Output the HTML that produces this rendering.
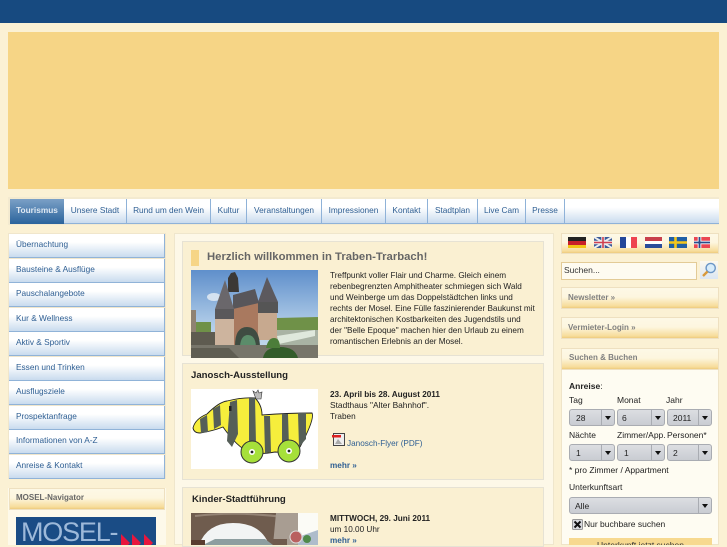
<!DOCTYPE html>
<html lang="de"><head><meta charset="utf-8"><title>Traben-Trarbach</title>
<style>
html,body{margin:0;padding:0}
body{width:727px;height:545px;overflow:hidden;position:relative;background:#fbf1d4;font-family:"Liberation Sans",sans-serif;font-size:8.5px;color:#222}
div,a,span.a{position:absolute;box-sizing:border-box;white-space:nowrap}
.nav{top:199px;height:25px;background:linear-gradient(#fff 0%,#fff 35%,#c9dbee 100%);border-right:1px solid #8fb2d8;border-bottom:1px solid #8fb2d8;color:#2f5f93;line-height:22px;text-align:center;font-size:8.3px}
.side{left:9px;width:156px;height:24px;background:linear-gradient(#fff 0%,#fff 35%,#c9dbee 100%);border-bottom:1px solid #90b3d8;border-right:1px solid #90b3d8;color:#2f5f93;line-height:21px;padding-left:7px;font-size:8.3px}
.gold{background:linear-gradient(#fdf8e6 0%,#fdf6df 45%,#f7dc9a 90%,#eecb7c 100%);border:1px solid #eee0c0;color:#808080;font-weight:bold;font-size:8px;padding-left:6px}
.box{left:182px;width:362px;background:#faf0d2;border:1px solid #e6e2d4}
.t{font-size:8.2px;line-height:11px;color:#222}
.sel{height:17px;background:linear-gradient(#dcdee2,#c9ccd2);border:1px solid #a9acb2;border-radius:3px;font-size:8.5px;line-height:16px;padding-left:5px;color:#222}
.sel:after{content:"";position:absolute;right:3px;top:6px;border-left:3.5px solid transparent;border-right:3.5px solid transparent;border-top:4px solid #111}
.sel:before{content:"";position:absolute;right:12px;top:0;bottom:0;width:1px;background:#a9acb2}
.l{font-size:8.5px;color:#222}
</style></head><body>
<div style="left:0;top:0;width:727px;height:23px;background:#174a80"></div>
<div style="left:8px;top:32px;width:711px;height:157px;background:#f6d586"></div>

<div style="left:8px;top:197px;width:711px;height:28px;background:#f3ead0"></div>
<div style="left:10px;top:199px;width:709px;height:25px;background:linear-gradient(#fff 0%,#fff 35%,#c9dbee 100%);border-bottom:1px solid #8fb2d8"></div>
<div class="nav" style="left:10px;width:54px;background:linear-gradient(#7ba0c6,#2a639c);color:#dfe9f3;font-weight:bold;border:0">Tourismus</div>
<div class="nav" style="left:64px;width:63px">Unsere Stadt</div>
<div class="nav" style="left:127px;width:84px">Rund um den Wein</div>
<div class="nav" style="left:211px;width:36px">Kultur</div>
<div class="nav" style="left:247px;width:75px">Veranstaltungen</div>
<div class="nav" style="left:322px;width:64px">Impressionen</div>
<div class="nav" style="left:386px;width:42px">Kontakt</div>
<div class="nav" style="left:428px;width:50px">Stadtplan</div>
<div class="nav" style="left:478px;width:48px">Live Cam</div>
<div class="nav" style="left:526px;width:39px">Presse</div>

<div style="left:8px;top:233px;width:158px;height:246px;background:#f0e6cc"></div>
<div class="side" style="top:234px">Übernachtung</div>
<div class="side" style="top:259px">Bausteine &amp; Ausflüge</div>
<div class="side" style="top:283px">Pauschalangebote</div>
<div class="side" style="top:308px">Kur &amp; Wellness</div>
<div class="side" style="top:332px">Aktiv &amp; Sportiv</div>
<div class="side" style="top:357px">Essen und Trinken</div>
<div class="side" style="top:381px">Ausflugsziele</div>
<div class="side" style="top:406px">Prospektanfrage</div>
<div class="side" style="top:430px">Informationen von A-Z</div>
<div class="side" style="top:455px">Anreise &amp; Kontakt</div>

<div style="left:8px;top:488px;width:158px;height:57px;background:#fdf9ea"></div>
<div class="gold" style="left:9px;top:488px;width:156px;height:22px;line-height:18px;color:#666">MOSEL-Navigator</div>
<div style="left:16px;top:517px;width:140px;height:28px;background:#1a4c85;overflow:hidden"><div style="left:5px;top:1px;color:#9db9d9;font-size:27px;line-height:28px;letter-spacing:-1.2px">MOSEL-</div>
<svg style="position:absolute;left:105px;top:17px" width="35" height="18"><path d="M0 0l9 9-9 9zM11 0l9 9-9 9zM23 0l9 9-9 9z" fill="#e8163c"/></svg></div>

<div style="left:174px;top:233px;width:380px;height:312px;background:#fdf8e8;border:1px solid #efe6cc"></div>

<div class="box" style="top:241px;height:115px"></div>
<div style="left:191px;top:250px;width:8px;height:16px;background:#f6d586"></div>
<div style="left:207px;top:250px;font-size:11.3px;line-height:14px;font-weight:bold;color:#666">Herzlich willkommen in Traben-Trarbach!</div>
<svg style="position:absolute;left:191px;top:270px" width="127" height="88" viewBox="0 0 127 88">
<defs><linearGradient id="s" x1="0" y1="0" x2="0" y2="1"><stop offset="0" stop-color="#5f8fcb"/><stop offset=".65" stop-color="#b4cfe9"/><stop offset="1" stop-color="#c6daee"/></linearGradient></defs>
<rect width="127" height="88" fill="url(#s)"/>
<ellipse cx="23" cy="27" rx="7" ry="4" fill="#d5e2f0"/>
<path d="M0 52h20v12H0zM86 48l41-1v16H86z" fill="#6f9148"/>
<path d="M86 60h41v17H86z" fill="#a9b3a4"/><path d="M86 66l38-6v6l-36 8z" fill="#dfe8dc"/>
<path d="M0 62h24v16H0z" fill="#5e5b50"/><rect x="0" y="40" width="5" height="22" fill="#8f8272"/>
<path d="M24 49h19v27H24z" fill="#cdb49e"/>
<path d="M67 43h19v27H67z" fill="#c7a98f"/>
<path d="M43 30h24v46H43z" fill="#a9795f"/>
<path d="M42 25l22-6 4 14-26 6z" fill="#58565a"/>
<path d="M37 22V8l3-5 4-1 3 6 1 14z" fill="#3b3835"/>
<path d="M24 39l10-29 9 29z" fill="#6a676b"/>
<path d="M67 32l9-25 11 25z" fill="#5c595e"/>
<rect x="24" y="39" width="19" height="10" fill="#5a585a"/><rect x="67" y="32" width="20" height="11" fill="#555"/>
<path d="M44 76q0-19 12-19t13 19z" fill="#3f4c42"/><path d="M49 76q1-11 8-11t8 11z" fill="#5b8c6a"/>
<rect x="0" y="75" width="127" height="13" fill="#77756a"/>
<path d="M72 88q2-11 17-11t18 11z" fill="#335c2a"/>
<path d="M75 78q2-10 8-10t6 10z" fill="#4c7d3a"/>
<path d="M0 78h38l10 10H0z" fill="#5f5d52"/>
</svg>
<div class="t" style="left:330px;top:270px">Treffpunkt voller Flair und Charme. Gleich einem<br>rebenbegrenzten Amphitheater schmiegen sich Wald<br>und Weinberge um das Doppelstädtchen links und<br>rechts der Mosel. Eine Fülle faszinierender Baukunst mit<br>architektonischen Kostbarkeiten des Jugendstils und<br>der "Belle Epoque" machen hier den Urlaub zu einem<br>romantischen Erlebnis an der Mosel.</div>

<div class="box" style="top:363px;height:117px"></div>
<div style="left:191px;top:370px;font-size:9.6px;line-height:12px;font-weight:bold;color:#222">Janosch-Ausstellung</div>
<svg style="position:absolute;left:191px;top:389px" width="127" height="80" viewBox="0 0 127 80">
<rect width="127" height="80" fill="#fff"/>
<path id="b" d="M2 39Q4 30 16 25 28 13 36 12 52 8 64 9 71 16 71 26 96 24 121 24 124 30 109 58 96 64 84 63 68 66 58 63 46 58 32 38 22 42 9 44 3 44 2 39Z" fill="#f6ee3c" stroke="#222" stroke-width=".9"/>
<g fill="#555f58"><path d="M9 30l7-4 1 17-7 1zM22 20l7-4 1 20-7 4zM39 13l7-2 1 34-6 13-5-6zM58 9h6l1 46-7 4zM73 27h6l1 36-6 1zM91 25h6l1 33-7 5zM107 24h8v26l-7 8z"/></g>
<path d="M65 10l-3-8 3 2 2-3 1 3 3-1-1 7z" fill="#bbb" stroke="#333" stroke-width=".6"/>
<rect x="38" y="17" width="2.5" height="5" fill="#222"/>
<circle cx="61" cy="63" r="11" fill="#a6e03a" stroke="#333"/><circle cx="98" cy="62" r="11" fill="#a6e03a" stroke="#333"/>
<circle cx="61" cy="63" r="3" fill="#fff"/><circle cx="98" cy="62" r="3" fill="#fff"/>
<circle cx="61" cy="63" r="1.4" fill="#222"/><circle cx="98" cy="62" r="1.4" fill="#222"/>
</svg>
<div class="t" style="left:330px;top:389px;font-weight:bold">23. April bis 28. August 2011</div>
<div class="t" style="left:330px;top:400px;font-size:8.4px">Stadthaus "Alter Bahnhof".</div>
<div class="t" style="left:330px;top:411px">Traben</div>
<svg style="position:absolute;left:332px;top:433px" width="13" height="13"><rect x="1.5" y=".5" width="11" height="12" fill="#eee" stroke="#444"/><rect x="0" y="2" width="9" height="2.5" fill="#d22"/><path d="M3 11l3-5 4 5z" fill="#aaa"/></svg>
<div class="t" style="left:347px;top:438px;color:#2f5f93">Janosch-Flyer (PDF)</div>
<div class="t" style="left:330px;top:460px;color:#2f5f93;font-weight:bold">mehr »</div>

<div class="box" style="top:487px;height:60px"></div>
<div style="left:192px;top:494px;font-size:9.6px;line-height:12px;font-weight:bold;color:#222">Kinder-Stadtführung</div>
<svg style="position:absolute;left:191px;top:513px" width="127" height="32" viewBox="0 0 127 32">
<rect width="127" height="32" fill="#f2f4f4"/>
<path d="M0 0h107v32H78Q70 10 42 10 16 10 8 32H0z" fill="#6f5c4e"/>
<path d="M4 3Q45-2 92 4" stroke="#958476" stroke-width="2" fill="none"/>
<path d="M85 0h22v32H82z" fill="#a89d92"/><rect x="107" width="20" height="32" fill="#fbfbf6"/>
<path d="M107 24l20-7v15h-20z" fill="#aebccb"/><path d="M12 32l12-6 50 0 8 6z" fill="#8d9ea0"/>
<circle cx="105" cy="24" r="6" fill="#b96060" stroke="#ddd"/><circle cx="116" cy="26" r="4" fill="#4f8a4a"/>
<rect x="0" y="27" width="14" height="5" fill="#5a3d30"/><rect x="82" y="26" width="14" height="6" fill="#6f5a4c"/>
</svg>
<div class="t" style="left:330px;top:513px;font-weight:bold">MITTWOCH, 29. Juni 2011</div>
<div class="t" style="left:330px;top:524px">um 10.00 Uhr</div>
<div class="t" style="left:330px;top:535px;color:#2f5f93;font-weight:bold">mehr »</div>

<div class="gold" style="left:561px;top:233px;width:158px;height:21px"></div>
<svg style="position:absolute;left:568px;top:237px" width="18" height="11"><rect width="18" height="4" fill="#222"/><rect y="4" width="18" height="4" fill="#c8202a"/><rect y="8" width="18" height="3" fill="#f2c518"/></svg>
<svg style="position:absolute;left:594px;top:237px" width="18" height="11"><rect width="18" height="11" fill="#3a5a98"/><path d="M0 0l18 11M18 0L0 11" stroke="#eee" stroke-width="2"/><path d="M9 0v11M0 5.5h18" stroke="#eee" stroke-width="3.4"/><path d="M9 0v11M0 5.5h18" stroke="#d04050" stroke-width="1.6"/></svg>
<svg style="position:absolute;left:620px;top:237px" width="17" height="11"><rect width="6" height="11" fill="#24479a"/><rect x="6" width="5" height="11" fill="#fff"/><rect x="11" width="6" height="11" fill="#ee4450"/></svg>
<svg style="position:absolute;left:645px;top:237px" width="17" height="11"><rect width="17" height="4" fill="#c8404c"/><rect y="4" width="17" height="3" fill="#fff"/><rect y="7" width="17" height="4" fill="#2a4c9a"/></svg>
<svg style="position:absolute;left:669px;top:237px" width="18" height="11"><rect width="18" height="11" fill="#1f5fa6"/><path d="M6.5 0v11M0 5.5h18" stroke="#f3c51c" stroke-width="2.6"/></svg>
<svg style="position:absolute;left:694px;top:237px" width="16" height="11"><rect width="16" height="11" fill="#ea4652"/><path d="M5.5 0v11M0 5.5h16" stroke="#fff" stroke-width="3.6"/><path d="M5.5 0v11M0 5.5h16" stroke="#2a4c8c" stroke-width="1.8"/></svg>

<div style="left:561px;top:262px;width:136px;height:18px;background:#fefbf0;border:1px solid #e3cb96;font-size:8.5px;line-height:15px;padding-left:2px;color:#333">Suchen...</div>
<div style="left:700px;top:261px;width:18px;height:18px;background:linear-gradient(#fdf9ee,#dce7f2)"></div>
<svg style="position:absolute;left:701px;top:262px" width="16" height="16"><circle cx="9.7" cy="6" r="4.6" fill="#d8ecfa" stroke="#6b96c6" stroke-width="1.4"/><path d="M6.5 9.5L2 14" stroke="#d99a3c" stroke-width="2.4"/></svg>

<div class="gold" style="left:561px;top:287px;width:158px;height:22px;line-height:20px">Newsletter »</div>
<div class="gold" style="left:561px;top:317px;width:158px;height:22px;line-height:20px">Vermieter-Login »</div>

<div style="left:561px;top:348px;width:158px;height:197px;background:#fefcf2;border:1px solid #efe4c8"></div>
<div class="gold" style="left:561px;top:348px;width:158px;height:22px;line-height:18px;padding-left:7px">Suchen &amp; Buchen</div>
<div class="l" style="left:569px;top:381px;font-weight:bold">Anreise<span style="font-weight:normal">:</span></div>
<div class="l" style="left:569px;top:395px">Tag</div><div class="l" style="left:617px;top:395px">Monat</div><div class="l" style="left:666px;top:395px">Jahr</div>
<div class="sel" style="left:569px;top:409px;width:46px;padding-left:6px">28</div>
<div class="sel" style="left:617px;top:409px;width:48px;padding-left:4px">6</div>
<div class="sel" style="left:667px;top:409px;width:45px;padding-left:5px">2011</div>
<div class="l" style="left:569px;top:430px">Nächte</div><div class="l" style="left:617px;top:430px">Zimmer/App.</div><div class="l" style="left:667px;top:430px">Personen*</div>
<div class="sel" style="left:569px;top:444px;width:46px;padding-left:6px">1</div>
<div class="sel" style="left:617px;top:444px;width:48px;padding-left:6px">1</div>
<div class="sel" style="left:667px;top:444px;width:45px;padding-left:5px">2</div>
<div class="l" style="left:569px;top:465px">* pro Zimmer / Appartment</div>
<div class="l" style="left:569px;top:482px">Unterkunftsart</div>
<div class="sel" style="left:569px;top:497px;width:143px;padding-left:5px">Alle</div>
<svg style="position:absolute;left:572px;top:519px" width="11" height="11"><rect x=".5" y=".5" width="10" height="10" rx="1" fill="#d8dade" stroke="#999"/><path d="M2.5 2.5l6 6M8.5 2.5l-6 6" stroke="#111" stroke-width="2"/></svg>
<div class="l" style="left:584px;top:519px">Nur buchbare suchen</div>
<div style="left:569px;top:538px;width:143px;height:7px;background:#f7d98f;font-size:8.5px;line-height:14px;text-align:center;overflow:hidden;color:#333">Unterkunft jetzt suchen</div>
</body></html>
